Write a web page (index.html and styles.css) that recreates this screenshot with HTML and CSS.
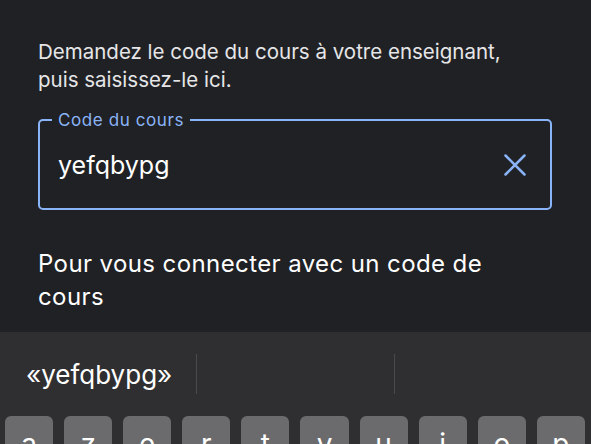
FILE: index.html
```html
<!DOCTYPE html>
<html lang="fr">
<head>
<meta charset="utf-8">
<link rel="stylesheet" href="styles.css">
</head>
<body>
<main class="content">
  <p class="intro">Demandez le code du cours à votre enseignant, puis saisissez-le ici.</p>
  <fieldset class="field">
    <legend class="field-label">Code du cours</legend>
    <div class="field-row">
      <span class="field-value">yefqbypg</span>
      <svg class="clear-icon" width="22" height="22" viewBox="0 0 22 22" aria-hidden="true">
        <path d="M1.5 1.5 L20.5 20.5 M20.5 1.5 L1.5 20.5" stroke="#8ab4f8" stroke-width="2.5" stroke-linecap="round" fill="none"/>
      </svg>
    </div>
  </fieldset>
  <p class="help">Pour vous connecter avec un code de cours</p>
</main>
<section class="keyboard">
  <div class="suggestions">
    <div class="suggestion">«yefqbypg»</div>
    <div class="divider"></div>
    <div class="suggestion"></div>
    <div class="divider"></div>
    <div class="suggestion"></div>
  </div>
  <div class="key-row">
    <div class="key">a</div>
    <div class="key">z</div>
    <div class="key">e</div>
    <div class="key">r</div>
    <div class="key">t</div>
    <div class="key">y</div>
    <div class="key">u</div>
    <div class="key">i</div>
    <div class="key">o</div>
    <div class="key">p</div>
  </div>
</section>
</body>
</html>
```
FILE: styles.css
```css
html, body {
  margin: 0;
  padding: 0;
}
body {
  width: 591px;
  height: 444px;
  overflow: hidden;
  background: #202124;
  font-family: Inter, Roboto, "Liberation Sans", sans-serif;
  color: #e8eaed;
}
.content {
  padding: 0 39px 0 38px;
  height: 332px;
  box-sizing: border-box;
  overflow: hidden;
}
.intro {
  margin: 0;
  padding-top: 38px;
  max-width: 480px;
  font-size: 20.5px;
  line-height: 28px;
  font-weight: 400;
  color: #e6e6e8;
}
.field {
  margin: 17px 0 0 0;
  padding: 0 24px 0 18px;
  height: 99px;
  box-sizing: border-box;
  border: 2px solid #8ab4f8;
  border-radius: 5px;
}
.field-label {
  margin-left: -6px;
  padding: 0 6px;
  font-size: 17px;
  line-height: 18px;
  letter-spacing: 0.6px;
  color: #8ab4f8;
}
.field-row {
  display: flex;
  align-items: center;
  justify-content: space-between;
  height: 72px;
}
.field-value {
  font-size: 25px;
  color: #ffffff;
}
.clear-icon {
  display: block;
}
.help {
  margin: 37px 0 0 0;
  font-size: 24px;
  line-height: 33px;
  letter-spacing: 0.4px;
  color: #ffffff;
  width: 470px;
}
.keyboard {
  background: #2f2f31;
  height: 112px;
}
.suggestions {
  display: flex;
  align-items: center;
  height: 84px;
}
.suggestion {
  flex: 1;
  padding-left: 26px;
  font-size: 26px;
  color: #ffffff;
}
.divider {
  width: 1px;
  height: 40px;
  background: #4a4a4c;
}
.key-row {
  display: flex;
  gap: 11px;
  padding: 0 6px 0 5px;
}
.key {
  flex: 1;
  height: 56px;
  border-radius: 6px;
  background: #6b6b6d;
  color: #ffffff;
  font-size: 28px;
  line-height: 56px;
  text-align: center;
}
```
